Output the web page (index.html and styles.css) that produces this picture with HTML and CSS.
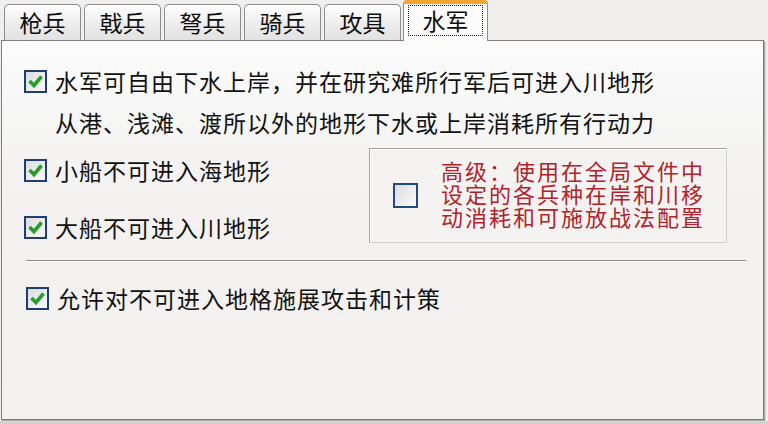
FILE: index.html
```html
<!DOCTYPE html>
<html lang="zh-CN">
<head>
<meta charset="utf-8">
<title>水军</title>
<link rel="stylesheet" href="styles.css">
</head>
<body>
<div class="app">
  <div class="tabs">
    <div class="tab">枪兵</div>
    <div class="tab">戟兵</div>
    <div class="tab">弩兵</div>
    <div class="tab">骑兵</div>
    <div class="tab">攻具</div>
    <div class="tab active"><span class="focus">水军</span></div>
  </div>
  <div class="panel">
    <div class="row first">
      <span class="cb checked"><svg viewBox="0 0 19 19" width="19" height="19"><path d="M3.5 9 L8 13.5 L15.5 4.5" fill="none" stroke="#2a9a2e" stroke-width="3.6"/></svg></span>
      <span class="label">水军可自由下水上岸，并在研究难所行军后可进入川地形</span>
    </div>
    <div class="note">从港、浅滩、渡所以外的地形下水或上岸消耗所有行动力</div>
    <div class="middle">
      <div class="leftcol">
        <div class="row r3">
          <span class="cb checked"><svg viewBox="0 0 19 19" width="19" height="19"><path d="M3.5 9 L8 13.5 L15.5 4.5" fill="none" stroke="#2a9a2e" stroke-width="3.6"/></svg></span>
          <span class="label">小船不可进入海地形</span>
        </div>
        <div class="row r4">
          <span class="cb checked"><svg viewBox="0 0 19 19" width="19" height="19"><path d="M3.5 9 L8 13.5 L15.5 4.5" fill="none" stroke="#2a9a2e" stroke-width="3.6"/></svg></span>
          <span class="label">大船不可进入川地形</span>
        </div>
      </div>
      <div class="group">
        <span class="cb big"></span>
        <div class="redtext">
          <div class="redline">高级：使用在全局文件中</div>
          <div class="redline">设定的各兵种在岸和川移</div>
          <div class="redline">动消耗和可施放战法配置</div>
        </div>
      </div>
    </div>
    <div class="sep"></div>
    <div class="row r5">
      <span class="cb checked"><svg viewBox="0 0 19 19" width="19" height="19"><path d="M3.5 9 L8 13.5 L15.5 4.5" fill="none" stroke="#2a9a2e" stroke-width="3.6"/></svg></span>
      <span class="label">允许对不可进入地格施展攻击和计策</span>
    </div>
  </div>
</div>
</body>
</html>
```
FILE: styles.css
```css
html, body {
  margin: 0;
  padding: 0;
}
body {
  width: 768px;
  height: 424px;
  overflow: hidden;
  background: #d3d0cb;
  font-family: "Noto Sans CJK SC", "Noto Sans", sans-serif;
  color: #111;
}
.app {
  height: 421px;
  background: #f0efee;
}
.tabs {
  display: flex;
  align-items: flex-end;
  height: 40px;
  padding-left: 4px;
  gap: 3px;
  position: relative;
  z-index: 2;
}
.tab {
  box-sizing: border-box;
  width: 77px;
  height: 36px;
  border: 1px solid #8c8c8c;
  border-bottom: none;
  border-radius: 5px 5px 0 0;
  background: linear-gradient(#fefefe, #ebebeb 60%, #e2e2e2);
  font-size: 23px;
  line-height: 34px;
  text-align: center;
  color: #0c0c0c;
}
.tab.active {
  width: 85px;
  height: 41px;
  margin-left: -1px;
  margin-bottom: -1px;
  background: #fcfcfc;
  border-top: 4px solid #f2a531;
  border-radius: 4px 4px 0 0;
  padding: 1px 4px 0;
}
.focus {
  display: block;
  box-sizing: border-box;
  height: 31px;
  border: 1px dotted #222;
  line-height: 28px;
}
.panel {
  box-sizing: border-box;
  margin-left: 1px;
  width: 763px;
  height: 380px;
  border: 1px solid #7c7c7c;
  box-shadow: 1px 1px 0 #a8a8a8, 2px 2px 0 #d8d8d8;
  background: linear-gradient(#fbfbfb, #f3f2f1 40%, #f2f1f0);
  padding: 20px 19px 0 22px;
}
.row {
  display: flex;
  align-items: center;
  height: 24px;
  font-size: 23px;
  letter-spacing: 1px;
  line-height: 24px;
}
.row.first {
  height: 40px;
}
.cb {
  box-sizing: border-box;
  flex: none;
  width: 23px;
  height: 23px;
  border: 2px solid #1e3d72;
  background: linear-gradient(135deg, #dcdcdc, #fafafa);
  display: flex;
  align-items: center;
  justify-content: center;
  margin-right: 8px;
}
.cb.big {
  width: 25px;
  height: 25px;
  margin-right: 23px;
  border-color: #24497e;
}
.note {
  font-size: 23px;
  letter-spacing: 1px;
  line-height: 42px;
  height: 42px;
  padding-left: 31px;
}
.middle {
  display: flex;
  align-items: flex-start;
  height: 100px;
}
.leftcol {
  width: 345px;
  flex: none;
}
.row.r3 {
  margin-top: 15px;
}
.row.r4 {
  margin-top: 33px;
}
.group {
  box-sizing: border-box;
  margin-top: 5px;
  width: 358px;
  height: 95px;
  border: 1px solid #a4a4a4;
  border-right-color: #d0d0d0;
  border-bottom-color: #d0d0d0;
  box-shadow: inset 1px 1px 0 #fff;
  background: #f4f3f2;
  display: flex;
  align-items: center;
  padding-left: 23px;
}
.redtext {
  color: #b1232a;
  white-space: nowrap;
  font-family: "Liberation Sans", "Noto Sans CJK SC", sans-serif;
}
.redline {
  font-size: 22px;
  letter-spacing: 2px;
  line-height: 23px;
  height: 23px;
}
.sep {
  margin-top: 17px;
  width: 720px;
  margin-left: 2px;
  height: 1px;
  background: #8c8c8c;
  border-bottom: 1px solid #fdfdfd;
}
.row.r5 {
  margin-top: 24px;
  margin-left: 2px;
}
```
